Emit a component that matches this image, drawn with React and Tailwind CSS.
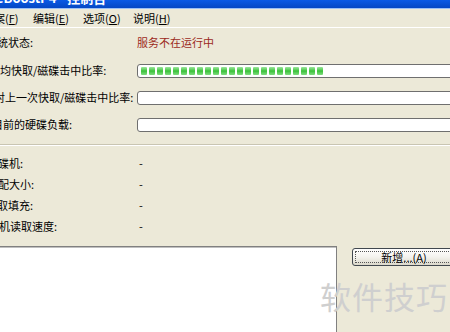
const FONT = { fontFamily: '"Noto Sans CJK SC", "Noto Sans", sans-serif' }

const MENU = [
  ['档案', 'F'],
  ['编辑', 'E'],
  ['选项', 'O'],
  ['说明', 'H'],
]

const DETAILS = [
  ['ml-[-13px]', '磁碟机:'],
  ['ml-[-13px]', '分配大小:'],
  ['ml-[-14px]', '预取填充:'],
  ['ml-[-23px]', '磁碟机读取速度:'],
]

function Meter({ blocks = 0 }) {
  return (
    <div className="flex h-[14px] w-[340px] shrink-0 items-center gap-[2px] rounded-[3px] border border-[#6f6f6f] bg-white px-[3px]">
      {Array.from({ length: blocks }).map((_, i) => (
        <span key={i} className="h-[8px] w-[6px] rounded-[1px] bg-gradient-to-b from-[#9ce79c] via-[#37c237] to-[#7fdc7f]" />
      ))}
    </div>
  )
}

export default function App() {
  return (
    <div className="relative h-[332px] w-[450px] overflow-hidden bg-[#ece9d8] text-[11px] leading-none text-black" style={FONT}>
      <div className="h-[9px] overflow-hidden border-b border-[#9cc0f5] bg-gradient-to-b from-[#0a5ae6] to-[#0547c4]">
        <div className="mt-[-9px] ml-[-4px] whitespace-nowrap text-[13px] font-bold text-white">eBoostr 4 - 控制台</div>
      </div>
      <div className="flex h-[19px] items-center border-b border-white">
        {MENU.map(([name, key], i) => (
          <span key={name} className={i === 0 ? 'ml-[-17px] w-[50px] shrink-0' : 'w-[50px] shrink-0'}>
            {name}(<span className="underline">{key}</span>)
          </span>
        ))}
      </div>

      <div className="pt-[4px]">
        <div className="flex h-[20px] items-center">
          <span className="w-[137px] shrink-0"><span className="ml-[-14px]">系统状态:</span></span>
          <span className="text-[#9c2a1c]">服务不在运行中</span>
        </div>
        <div className="mt-[5px] flex h-[27px] items-center">
          <span className="w-[137px] shrink-0 whitespace-nowrap"><span className="ml-[-11px]">平均快取/磁碟击中比率:</span></span>
          <Meter blocks={23} />
        </div>
        <div className="flex h-[27px] items-center">
          <span className="w-[137px] shrink-0 whitespace-nowrap"><span className="ml-[-6px]">对上一次快取/磁碟击中比率:</span></span>
          <Meter />
        </div>
        <div className="flex h-[27px] items-center">
          <span className="w-[137px] shrink-0 whitespace-nowrap"><span className="ml-[-8px]">目前的硬碟负载:</span></span>
          <Meter />
        </div>
      </div>

      <div className="mt-[6px] border-t border-b border-t-[#c9c5b2] border-b-white" />

      <div className="pt-[7px]">
        {DETAILS.map(([shift, label]) => (
          <div key={label} className="flex h-[21px] items-center">
            <span className="w-[139px] shrink-0 whitespace-nowrap"><span className={shift}>{label}</span></span>
            <span>-</span>
          </div>
        ))}
      </div>

      <div className="mt-[9px] flex items-start">
        <div className="ml-[-4px] h-[100px] w-[341px] shrink-0 border border-[#808080] bg-white shadow-[inset_1px_1px_0_#c0c0c0]" />
        <button className="ml-[15px] mt-[2px] flex h-[18px] w-[104px] shrink-0 items-center justify-center rounded-[3px] border border-[#41484f] bg-gradient-to-b from-[#ffffff] via-[#f4f3ee] to-[#dcd9cb] p-[2px]">
          <span className="flex h-full w-full items-center justify-center border border-dotted border-[#555]">新增...(A)</span>
        </button>
      </div>

      <div className="absolute left-[320px] top-[280px] whitespace-nowrap text-[31px] tracking-[1px] text-[#cfcfcf]">软件技巧</div>
    </div>
  )
}
